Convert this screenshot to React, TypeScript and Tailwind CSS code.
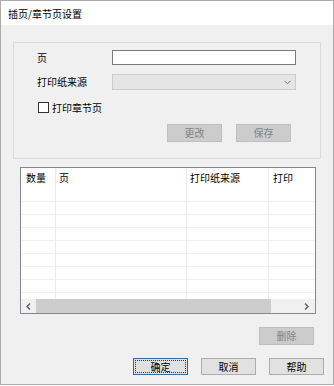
const rowCount = 8;

function Btn({ label, disabled, primary }: { label: string; disabled?: boolean; primary?: boolean }) {
  if (disabled) {
    return (
      <div className="flex h-[18px] w-[55px] items-center justify-center border border-[#bfbfbf] bg-[#cccccc] text-[#838383]">
        {label}
      </div>
    );
  }
  if (primary) {
    return (
      <div className="flex h-[17px] w-[55px] border border-[#0078d7] bg-[#e1e1e1] p-[1px]">
        <div className="flex flex-1 items-center justify-center border border-dotted border-[#333]">{label}</div>
      </div>
    );
  }
  return (
    <div className="flex h-[17px] w-[55px] items-center justify-center border border-[#adadad] bg-[#e1e1e1]">
      {label}
    </div>
  );
}

function Cols({ header, h, last }: { header?: boolean; h: string; last?: boolean }) {
  const line = last ? "" : header ? "" : "border-b border-[#f0f0f0]";
  return (
    <div className={`flex ${h} ${line}`}>
      <div className="w-[35px] border-r border-[#ebebeb] pl-[5px] pt-[5px]">{header ? "数量" : ""}</div>
      <div className="w-[131px] border-r border-[#ebebeb] pl-[3px] pt-[5px]">{header ? "页" : ""}</div>
      <div className="w-[82px] border-r border-[#ebebeb] pl-[3px] pt-[5px]">{header ? "打印纸来源" : ""}</div>
      <div className="flex-1 pl-[4px] pt-[5px]">{header ? "打印" : ""}</div>
    </div>
  );
}

export default function App() {
  return (
    <div className="h-[386px] w-[334px] bg-white font-['Noto_Sans_CJK_SC','Microsoft_YaHei',sans-serif] text-[10px] leading-none text-black">
      <div className="flex h-[385px] flex-col border border-[#ababab]">
        {/* title bar */}
        <div className="flex h-[24px] items-center bg-white pl-[7px] pt-[2px]">插页/章节页设置</div>

        <div className="flex flex-1 flex-col bg-[#f0f0f0]">
          {/* group box */}
          <div className="ml-[12px] mt-[17px] h-[117px] w-[308px] border border-[#dcdcdc] pl-[23px] pt-[7px]">
            <div className="flex h-[15px] items-center">
              <div className="w-[75px]">页</div>
              <div className="h-[15px] w-[184px] border border-[#7a7a7a] bg-white" />
            </div>
            <div className="mt-[9px] flex h-[16px] items-center">
              <div className="w-[75px]">打印纸来源</div>
              <div className="flex h-[16px] w-[184px] items-center justify-end border border-[#cccccc] bg-[#e5e5e5] pr-[4px]">
                <svg width="7" height="5" viewBox="0 0 7 5">
                  <path d="M0.5 0.8 L3.5 3.8 L6.5 0.8" fill="none" stroke="#6d6d6d" strokeWidth="1" />
                </svg>
              </div>
            </div>
            <div className="mt-[12px] flex h-[11px] items-center">
              <div className="ml-[1px] h-[11px] w-[11px] border border-[#333] bg-white" />
              <div className="ml-[3px]">打印章节页</div>
            </div>
            <div className="mt-[11px] flex justify-end gap-[14px] pr-[29px]">
              <Btn label="更改" disabled />
              <Btn label="保存" disabled />
            </div>
          </div>

          {/* list view */}
          <div className="ml-[19px] mt-[8px] flex h-[147px] w-[296px] flex-col border border-[#828790] bg-white">
            <Cols header h="h-[21px]" last />
            <Cols h="h-[13px]" />
            {Array.from({ length: rowCount - 1 }).map((_, i) => (
              <Cols key={i} h="h-[13px]" />
            ))}
            <Cols h="h-[6px]" last />
            <div className="flex h-[14px] bg-[#f0f0f0]">
              <div className="flex w-[15px] items-center justify-center">
                <svg width="5" height="7" viewBox="0 0 5 7">
                  <path d="M4 0.5 L1 3.5 L4 6.5" fill="none" stroke="#606060" strokeWidth="1.5" />
                </svg>
              </div>
              <div className="w-[235px] bg-[#cdcdcd]" />
              <div className="flex-1" />
              <div className="flex w-[17px] items-center justify-center">
                <svg width="5" height="7" viewBox="0 0 5 7">
                  <path d="M1 0.5 L4 3.5 L1 6.5" fill="none" stroke="#606060" strokeWidth="1.5" />
                </svg>
              </div>
            </div>
          </div>

          <div className="ml-[258px] mt-[13px]">
            <Btn label="删除" disabled />
          </div>

          <div className="ml-[132px] mt-[13px] flex gap-[13px]">
            <Btn label="确定" primary />
            <Btn label="取消" />
            <Btn label="帮助" />
          </div>
        </div>
      </div>
    </div>
  );
}
